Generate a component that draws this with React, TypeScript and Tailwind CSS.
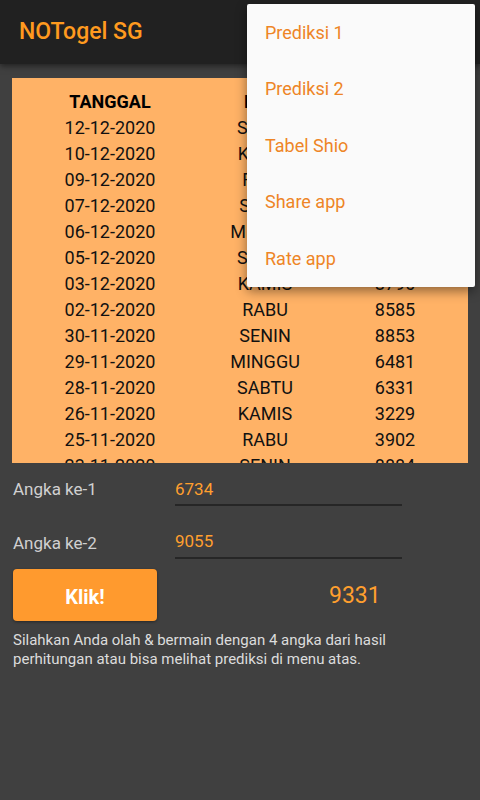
import React from "react";

type Row = { tanggal: string; hari: string; angka: string };

const ROWS: Row[] = [
  { tanggal: "12-12-2020", hari: "SABTU", angka: "4417" },
  { tanggal: "10-12-2020", hari: "KAMIS", angka: "2093" },
  { tanggal: "09-12-2020", hari: "RABU", angka: "7160" },
  { tanggal: "07-12-2020", hari: "SENIN", angka: "5528" },
  { tanggal: "06-12-2020", hari: "MINGGU", angka: "1845" },
  { tanggal: "05-12-2020", hari: "SABTU", angka: "6372" },
  { tanggal: "03-12-2020", hari: "KAMIS", angka: "8796" },
  { tanggal: "02-12-2020", hari: "RABU", angka: "8585" },
  { tanggal: "30-11-2020", hari: "SENIN", angka: "8853" },
  { tanggal: "29-11-2020", hari: "MINGGU", angka: "6481" },
  { tanggal: "28-11-2020", hari: "SABTU", angka: "6331" },
  { tanggal: "26-11-2020", hari: "KAMIS", angka: "3229" },
  { tanggal: "25-11-2020", hari: "RABU", angka: "3902" },
  { tanggal: "23-11-2020", hari: "SENIN", angka: "8884" },
];

const MENU = ["Prediksi 1", "Prediksi 2", "Tabel Shio", "Share app", "Rate app"];

export default function App() {
  return (
    <div
      className="relative w-[480px] h-[800px] overflow-hidden bg-[#404040]"
      style={{ fontFamily: "Roboto, 'Noto Sans', sans-serif" }}
    >
      {/* app bar */}
      <div className="h-16 bg-[#212121] flex items-center px-[19px] shadow-[0_2px_6px_rgba(0,0,0,0.5)] relative z-10">
        <h1 className="text-[23px] font-medium text-[#ff9a1f]">NOTogel SG</h1>
      </div>

      {/* table */}
      <div className="mx-3 mt-[14px] h-[385px] overflow-hidden bg-[#ffb266] pt-[10px]">
        <div className="grid grid-cols-[196px_114px_1fr] h-[26px] items-center text-[18px] font-bold text-black">
          <div className="text-center">TANGGAL</div>
          <div className="text-center">HARI</div>
          <div className="text-center">ANGKA</div>
        </div>
        {ROWS.map((r) => (
          <div
            key={r.tanggal}
            className="grid grid-cols-[196px_114px_1fr] h-[26px] items-center text-[18px] text-[#111]"
          >
            <div className="text-center">{r.tanggal}</div>
            <div className="text-center">{r.hari}</div>
            <div className="text-center">{r.angka}</div>
          </div>
        ))}
      </div>

      {/* form */}
      <div className="px-[13px]">
        <div className="flex items-end h-[43px]">
          <div className="w-[162px] text-[17px] text-[#d0d0d0] pb-[4px]">Angka ke-1</div>
          <div className="w-[227px] border-b-2 border-[#262626] text-[17px] text-[#ff9f2e] pb-[2px]">6734</div>
        </div>
        <div className="flex items-end h-[53px]">
          <div className="w-[162px] text-[17px] text-[#d0d0d0] pb-[3px]">Angka ke-2</div>
          <div className="w-[227px] border-b-2 border-[#262626] text-[17px] text-[#ff9f2e] pb-[3px]">9055</div>
        </div>
        <div className="flex items-center mt-[10px]">
          <button className="w-[144px] h-[52px] rounded-[4px] bg-[#ff9a2e] text-white text-[20px] font-bold pt-[3px] shadow-[0_1px_3px_rgba(0,0,0,0.4)]">
            Klik!
          </button>
          <div className="ml-[172px] text-[23px] text-[#ff9f2e] pt-[3px]">9331</div>
        </div>
        <p className="mt-[10px] text-[15px] leading-[19px] text-[#dcdcdc]">
          Silahkan Anda olah &amp; bermain dengan 4 angka dari hasil perhitungan atau bisa melihat prediksi di menu atas.
        </p>
      </div>

      {/* overflow menu */}
      <div className="absolute left-[247px] top-[4px] w-[228px] bg-[#fafafa] rounded-[2px] shadow-[0_4px_12px_rgba(0,0,0,0.45)] z-20">
        {MENU.map((m) => (
          <div key={m} className="h-[56.5px] flex items-center px-[18px] text-[18px] text-[#ee8526]">
            {m}
          </div>
        ))}
      </div>
    </div>
  );
}
